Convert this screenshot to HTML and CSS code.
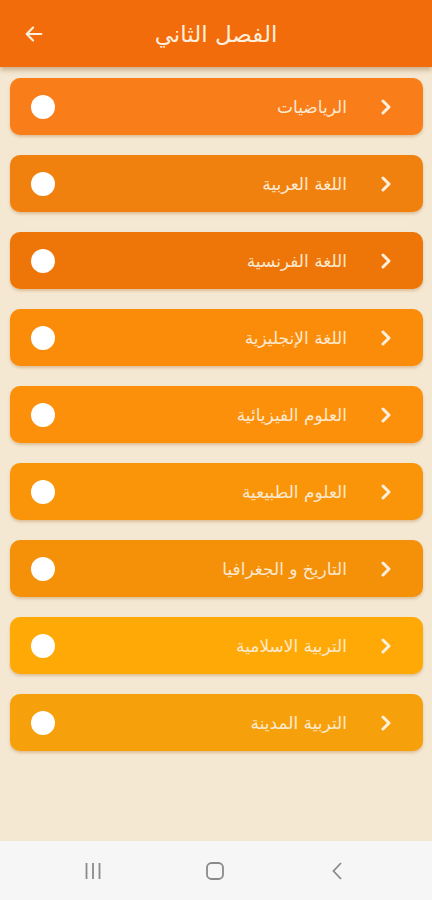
FILE: index.html
```html
<!DOCTYPE html>
<html lang="ar" dir="rtl">
<head>
  <meta charset="UTF-8">
  <title>الفصل الثاني</title>
  <link rel="stylesheet" href="styles.css">
</head>
<body>
  <div class="screen">
    <header class="topbar">
      <h1 class="title">الفصل الثاني</h1>
      <button class="back" aria-label="رجوع">
        <svg width="22" height="22" viewBox="0 0 24 24"><path d="M20 12H4M11 5l-7 7 7 7" fill="none" stroke="#fdf0dc" stroke-width="2.4" stroke-linecap="round" stroke-linejoin="round"/></svg>
      </button>
    </header>

    <!-- المواد -->
    <ul class="subjects">
      <li class="subject c1"><svg class="chev" width="12" height="16" viewBox="0 0 12 16"><path d="M3 2l6 6-6 6" /></svg><span class="name">الرياضيات</span><span class="dot"></span></li>
      <li class="subject c2"><svg class="chev" width="12" height="16" viewBox="0 0 12 16"><path d="M3 2l6 6-6 6" /></svg><span class="name">اللغة العربية</span><span class="dot"></span></li>
      <li class="subject c3"><svg class="chev" width="12" height="16" viewBox="0 0 12 16"><path d="M3 2l6 6-6 6" /></svg><span class="name">اللغة الفرنسية</span><span class="dot"></span></li>
      <li class="subject c4"><svg class="chev" width="12" height="16" viewBox="0 0 12 16"><path d="M3 2l6 6-6 6" /></svg><span class="name">اللغة الإنجليزية</span><span class="dot"></span></li>
      <li class="subject c5"><svg class="chev" width="12" height="16" viewBox="0 0 12 16"><path d="M3 2l6 6-6 6" /></svg><span class="name">العلوم الفيزيائية</span><span class="dot"></span></li>
      <li class="subject c6"><svg class="chev" width="12" height="16" viewBox="0 0 12 16"><path d="M3 2l6 6-6 6" /></svg><span class="name">العلوم الطبيعية</span><span class="dot"></span></li>
      <li class="subject c7"><svg class="chev" width="12" height="16" viewBox="0 0 12 16"><path d="M3 2l6 6-6 6" /></svg><span class="name">التاريخ و الجغرافيا</span><span class="dot"></span></li>
      <li class="subject c8"><svg class="chev" width="12" height="16" viewBox="0 0 12 16"><path d="M3 2l6 6-6 6" /></svg><span class="name">التربية الاسلامية</span><span class="dot"></span></li>
      <li class="subject c9"><svg class="chev" width="12" height="16" viewBox="0 0 12 16"><path d="M3 2l6 6-6 6" /></svg><span class="name">التربية المدينة</span><span class="dot"></span></li>
    </ul>

    <nav class="navbar" dir="ltr">
      <svg width="24" height="24" viewBox="0 0 24 24"><path d="M5.5 4v16M12 4v16M18.5 4v16" stroke="#8a8a8a" stroke-width="1.8"/></svg>
      <svg width="24" height="24" viewBox="0 0 24 24"><rect x="4" y="4" width="16" height="16" rx="4.5" fill="none" stroke="#8a8a8a" stroke-width="1.8"/></svg>
      <svg width="24" height="24" viewBox="0 0 24 24"><path d="M16 4l-7.5 8 7.5 8" fill="none" stroke="#8a8a8a" stroke-width="1.8"/></svg>
    </nav>
  </div>
</body>
</html>
```

FILE: styles.css
```css
* { box-sizing: border-box; }
body {
  margin: 0;
  background-color: #f4e8d3;
  font-family: "DejaVu Sans", "Noto Sans", sans-serif;
}
.screen {
  height: 900px;
  display: flex;
  flex-direction: column;
}
.topbar {
  height: 67px;
  background-color: #f36c0b;
  display: flex;
  align-items: center;
  justify-content: center;
  position: relative;
  box-shadow: 0 3px 5px rgba(120, 60, 0, 0.35);
  z-index: 1;
}
.title {
  margin: 0;
  color: #fdeedd;
  font-size: 23px;
  font-weight: normal;
}
.back {
  position: absolute;
  left: 23px;
  top: 23px;
  background: none;
  border: none;
  padding: 0;
  display: flex;
}
.subjects {
  list-style: none;
  margin: 0;
  padding: 11px 9px 0 10px;
  display: flex;
  flex-direction: column;
  gap: 20px;
  flex: 1;
}
.subject {
  height: 57px;
  border-radius: 10px;
  display: flex;
  align-items: center;
  padding: 0 31px 0 21px;
  box-shadow: 0 2px 3px rgba(170, 100, 20, 0.3);
}
.chev {
  fill: none;
  stroke: #fdf0dc;
  stroke-width: 3;
  stroke-linecap: round;
  stroke-linejoin: round;
  margin-left: 33px;
}
.name {
  flex: 1;
  color: #fbe9cf;
  font-size: 17px;
}
.dot {
  width: 24px;
  height: 24px;
  border-radius: 50%;
  background-color: #ffffff;
}
.c1 { background-color: #f97d19; }
.c2 { background-color: #f0810f; }
.c3 { background-color: #ee7508; }
.c4 { background-color: #fb8c0a; }
.c5 { background-color: #fc900a; }
.c6 { background-color: #fa950a; }
.c7 { background-color: #f59009; }
.c8 { background-color: #fea906; }
.c9 { background-color: #f6a10c; }
.navbar {
  height: 59px;
  background-color: #f6f6f6;
  display: flex;
  align-items: center;
  justify-content: space-between;
  padding: 0 83px 0 81px;
}
```
